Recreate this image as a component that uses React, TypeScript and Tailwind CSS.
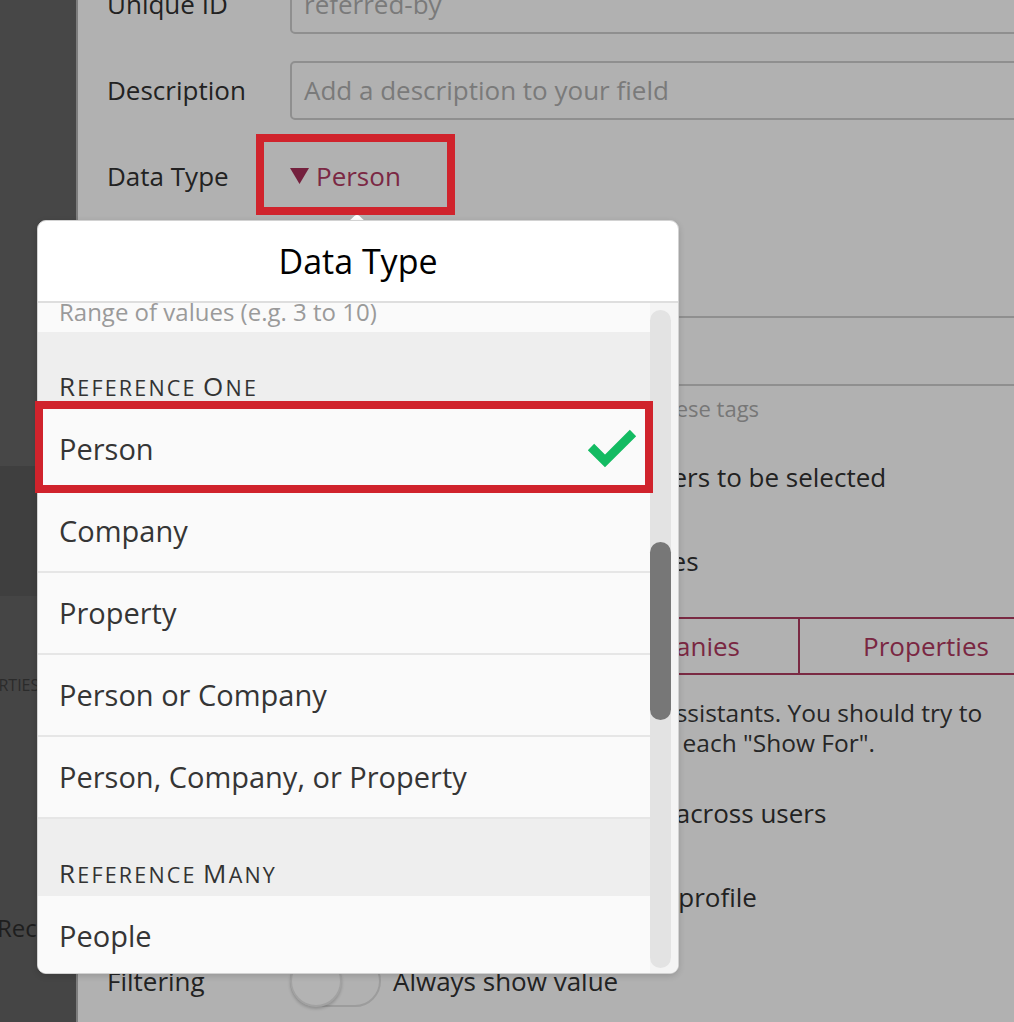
import React from "react";

const Label = ({ children }: { children?: React.ReactNode }) => (
  <div className="w-[183px] shrink-0 text-[26px] leading-[32px] text-[#222]">{children}</div>
);

const Toggle = () => (
  <div className="relative h-[52px] w-[91px] shrink-0 rounded-full border-2 border-[#9c9c9c]">
    <div className="absolute left-[-2px] top-[-2px] h-[52px] w-[52px] rounded-full border-2 border-[#a2a2a2] bg-[#b3b3b3] shadow-[0_2px_3px_rgba(0,0,0,0.18)]" />
  </div>
);

const ToggleRow = ({ label, text }: { label?: string; text: string }) => (
  <div className="flex h-[84px] shrink-0 items-center">
    <Label>{label}</Label>
    <Toggle />
    <div className="ml-[12px] whitespace-nowrap text-[26px] leading-[32px] text-[#222]">{text}</div>
  </div>
);

const Input = ({ text, h = "h-[59px]" }: { text?: string; h?: string }) => (
  <div
    className={`flex ${h} w-[760px] shrink-0 items-center rounded-[5px] border-2 border-[#8f8f8f] pl-[12px] text-[26px] text-[#7a7a7a]`}
  >
    {text}
  </div>
);

const SmallCaps = ({ words }: { words: string[] }) => (
  <span className="tracking-[2.2px] text-[#333]">
    {words.map((w, i) => (
      <span key={i}>
        {i > 0 ? " " : ""}
        <span className="text-[26px]">{w[0]}</span>
        <span className="text-[21.5px]">{w.slice(1).toUpperCase()}</span>
      </span>
    ))}
  </span>
);

const Row = ({ children }: { children: React.ReactNode }) => (
  <div className="flex h-[82px] shrink-0 items-center justify-between border-b-2 border-[#e6e6e6] bg-[#fafafa] pl-[21px] text-[29px] text-[#353535]">
    {children}
  </div>
);

const Section = ({ words }: { words: string[] }) => (
  <div className="flex h-[77px] shrink-0 items-end bg-[#eeeeee] pb-[6px] pl-[21px] leading-[26px]">
    <SmallCaps words={words} />
  </div>
);

export default function App() {
  return (
    <div className="relative h-[1022px] w-[1014px] overflow-hidden bg-[#b1b1b1] font-['Open_Sans',sans-serif]">
      <div className="flex h-full">
        {/* Sidebar */}
        <div className="flex w-[78px] shrink-0 flex-col overflow-hidden border-r-2 border-[#7d7d7d]">
          <div className="h-[466px] shrink-0 bg-[#474747]" />
          <div className="h-[130px] shrink-0 bg-[#3f3f3f]" />
          <div className="flex-1 bg-[#454545]">
            <div className="ml-[-52px] mt-[79px] whitespace-nowrap text-[16px] leading-[20px] text-[#2b2b2b]">
              PROPERTIES
            </div>
            <div className="ml-[-3px] mt-[218px] whitespace-nowrap text-[24px] leading-[30px] text-[#1e1e1e]">
              Records
            </div>
          </div>
        </div>

        {/* Main form */}
        <div className="flex-1 overflow-hidden pl-[29px]">
          <div className="mt-[-39px] flex flex-col">
            <div className="flex h-[86px] shrink-0 items-center">
              <Label>Unique ID</Label>
              <Input text="referred-by" />
            </div>
            <div className="flex h-[86px] shrink-0 items-center">
              <Label>Description</Label>
              <Input text="Add a description to your field" />
            </div>
            <div className="flex h-[86px] shrink-0 items-center">
              <Label>Data Type</Label>
              <div className="flex items-center gap-[7px] text-[26px] text-[#7b2844]">
                <svg width="19" height="16" viewBox="0 0 19 16">
                  <path d="M0 0 H19 L9.5 16 Z" fill="#74203d" />
                </svg>
                <span>Person</span>
              </div>
            </div>
            <div className="flex h-[86px] shrink-0 items-center">
              <Label>Show For</Label>
              <div className="text-[26px] text-[#222]">Everyone</div>
            </div>
            <div className="flex h-[92px] shrink-0 items-center">
              <Label>Tags</Label>
              <Input h="h-[70px]" />
            </div>
            <div className="flex h-[22px] shrink-0">
              <div className="w-[183px] shrink-0" />
              <div className="whitespace-nowrap text-[22px] leading-[22px] text-[#777]">
                Fields can be filtered and sorted by these tags
              </div>
            </div>
            <div className="mt-[16px]">
              <ToggleRow label="Options" text="Allow multiple other users to be selected" />
              <ToggleRow text="Include in search indexes" />
            </div>
            <div className="mt-[14px] flex h-[58px] shrink-0">
              <div className="flex w-[183px] shrink-0 items-center">
                <Label>Show For</Label>
              </div>
              <div className="grid h-[58px] w-[762px] shrink-0 grid-cols-3 border-y-2 border-[#7a2a43] text-[26px] text-[#7a2742]">
                <div className="flex items-center justify-center border-l-2 border-[#7a2a43]">People</div>
                <div className="flex items-center justify-center border-l-2 border-[#7a2a43]">Companies</div>
                <div className="flex items-center justify-center border-l-2 border-[#7a2a43]">Properties</div>
              </div>
            </div>
            <div className="mt-[23px] flex">
              <div className="w-[183px] shrink-0" />
              <div className="whitespace-nowrap text-[24.5px] leading-[30px] text-[#262626]">
                All fields are seen by agents and assistants. You should try to
                <br />
                limit the total number of fields for each &quot;Show For&quot;.
              </div>
            </div>
            <div className="mt-[13px]">
              <ToggleRow label="Sharing" text="Keep values consistent across users" />
              <ToggleRow label="Display" text="Show on each person's profile" />
              <ToggleRow label="Filtering" text="Always show value" />
            </div>
          </div>
        </div>
      </div>

      {/* Annotation: data type button */}
      <div className="absolute left-[256px] top-[134px] h-[81px] w-[199px] border-[8px] border-[#d0232c]" />

      {/* Popover arrow */}
      <svg className="absolute left-[347px] top-[215px]" width="20" height="6" viewBox="0 0 20 6">
        <path d="M0 6 C5 6 6 0 10 0 C14 0 15 6 20 6 Z" fill="#ffffff" />
      </svg>

      {/* Popover */}
      <div className="absolute left-[37px] top-[220px] flex h-[754px] w-[642px] flex-col overflow-hidden rounded-[9px] border border-[#d2d2d2] bg-white shadow-[0_2px_6px_rgba(0,0,0,0.15)]">
        <div className="flex h-[82px] shrink-0 items-center justify-center border-b-2 border-[#dedede] text-[34px] text-black">
          Data Type
        </div>
        <div className="flex min-h-0 flex-1">
          <div className="flex flex-1 flex-col overflow-hidden">
            <div className="h-[29px] shrink-0 overflow-hidden bg-[#fafafa] pl-[21px]">
              <div className="mt-[-3px] whitespace-nowrap text-[24px] leading-[24px] text-[#9a9a9a]">
                Range of values (e.g. 3 to 10)
              </div>
            </div>
            <Section words={["Reference", "One"]} />
            <Row>
              <span>Person</span>
              <svg className="mr-[12px]" width="52" height="40" viewBox="0 0 52 40">
                <polyline points="5,18 19,32 47,4" fill="none" stroke="#13bb62" strokeWidth="9" strokeLinejoin="miter" />
              </svg>
            </Row>
            <Row>
              <span>Company</span>
            </Row>
            <Row>
              <span>Property</span>
            </Row>
            <Row>
              <span>Person or Company</span>
            </Row>
            <Row>
              <span>Person, Company, or Property</span>
            </Row>
            <Section words={["Reference", "Many"]} />
            <Row>
              <span>People</span>
            </Row>
          </div>
          <div className="flex w-[28px] shrink-0 bg-[#f4f4f4] pb-[5px] pt-[7px]">
            <div className="relative w-[21px] rounded-full bg-[#e3e3e3]">
              <div className="absolute left-0 top-[232px] h-[178px] w-[21px] rounded-full bg-[#777777]" />
            </div>
          </div>
        </div>
      </div>

      {/* Annotation: selected row */}
      <div className="absolute left-[35px] top-[401px] h-[92px] w-[618px] border-[8px] border-[#d0232c]" />
    </div>
  );
}
